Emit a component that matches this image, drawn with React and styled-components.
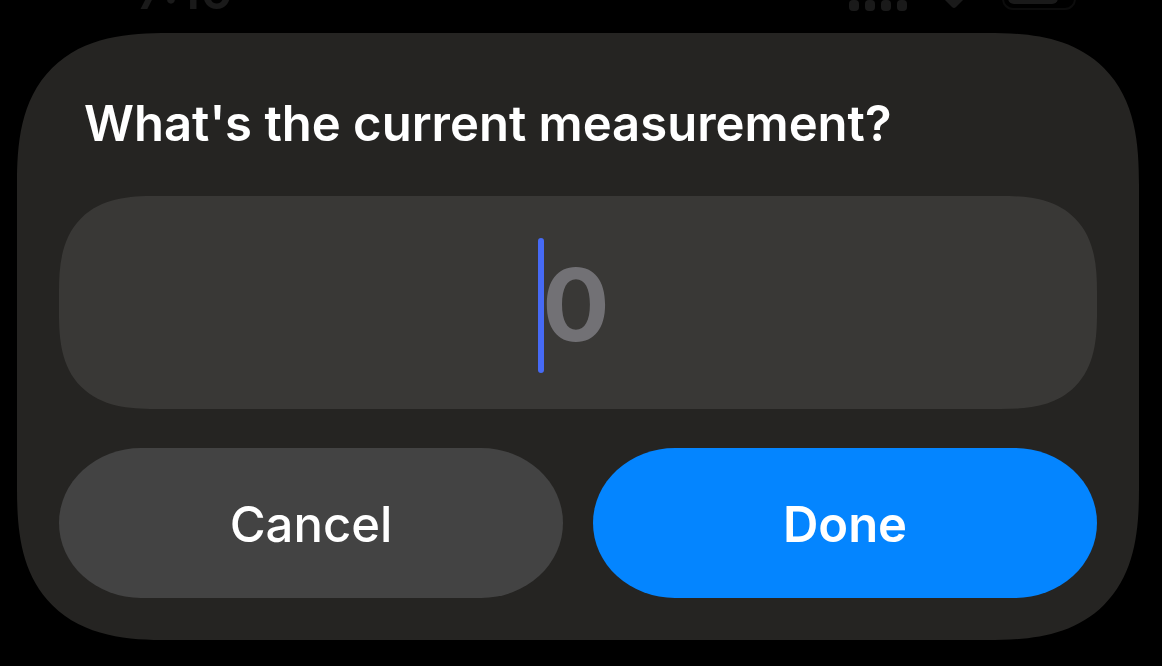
import React, { useState } from "react";
import styled, { createGlobalStyle } from "styled-components";

const GlobalStyle = createGlobalStyle`
  *, *::before, *::after { box-sizing: border-box; }
  html { background: #000; }
  body { margin: 0; background: #000; font-family: Inter, "Liberation Sans", sans-serif; }
`;

const Screen = styled.main`
  min-height: 100vh;
  overflow: hidden;
`;

const StatusBar = styled.header`
  display: flex;
  align-items: flex-start;
  justify-content: space-between;
  height: 33px;
  padding: 0 84px 0 136px;
  overflow: hidden;
  color: #1a1a1a;
`;

const Time = styled.time`
  margin-top: -39px;
  font-size: 50px;
  font-weight: 600;
  line-height: 60px;
`;

const StatusIcons = styled.svg`
  display: block;
  width: 230px;
  height: 16px;
`;

const Dialog = styled.form`
  display: flex;
  flex-direction: column;
  margin: 0 23px 0 17px;
  padding: 61px 42px 42px;
  background: #252422;
  border-radius: 122px;
  @supports (corner-shape: superellipse(1.4)) {
    border-radius: 152px;
    corner-shape: superellipse(1.4);
  }
`;

const Title = styled.label`
  padding: 0 25px;
  color: #fff;
  font-size: 49px;
  font-weight: 600;
  line-height: 60px;
`;

const Field = styled.div`
  position: relative;
  display: flex;
  height: 213px;
  margin: 42px 0 39px;
  background: #393836;
  border-radius: 76px;
  @supports (corner-shape: superellipse(1.4)) {
    border-radius: 96px;
    corner-shape: superellipse(1.4);
  }
`;

const ValueInput = styled.input`
  width: 100%;
  padding: 4px 4px 0 0;
  border: 0;
  outline: 0;
  background: transparent;
  color: #fff;
  caret-color: transparent;
  font: 700 100px Inter, "Liberation Sans", sans-serif;
  text-align: center;
  &::placeholder { color: #727175; opacity: 1; }
`;

const Caret = styled.span`
  position: absolute;
  top: 42px;
  left: calc(50% - 40px);
  width: 6px;
  height: 135px;
  border-radius: 3px;
  background: #466af5;
`;

const Actions = styled.div`
  display: grid;
  grid-template-columns: 1fr 1fr;
  gap: 30px;
`;

const Button = styled.button`
  height: 150px;
  padding: 2px 0 0;
  border: 0;
  border-radius: 82px / 75px;
  background: ${({ $primary }) => ($primary ? "#0485ff" : "#434343")};
  color: #fff;
  font: ${({ $primary }) => ($primary ? 600 : 500)} 49px Inter, "Liberation Sans", sans-serif;
`;

export default function App() {
  const [value, setValue] = useState("");
  return (
    <>
      <GlobalStyle />
      <Screen>
        <StatusBar>
          <Time>7:10</Time>
          <StatusIcons viewBox="0 0 230 16" aria-hidden="true">
            {[1, 17, 33, 49].map((x) => (
              <rect key={x} x={x} y="0" width="10" height="11" rx="4" fill="currentColor" />
            ))}
            <path d="M97 0H115L108 7Q106 9 104 7Z" fill="currentColor" />
            <rect x="155" y="-24" width="72" height="33" rx="10" fill="none" stroke="#0c0c0c" strokeWidth="2" />
            <rect x="160" y="-19" width="50" height="23" rx="6" fill="currentColor" />
          </StatusIcons>
        </StatusBar>
        <Dialog onSubmit={(e) => e.preventDefault()}>
          <Title htmlFor="measurement">What's the current measurement?</Title>
          <Field>
            <ValueInput
              id="measurement"
              inputMode="decimal"
              placeholder="0"
              value={value}
              onChange={(e) => setValue(e.target.value)}
            />
            {value === "" && <Caret />}
          </Field>
          <Actions>
            <Button type="button" onClick={() => setValue("")}>Cancel</Button>
            <Button type="submit" $primary>Done</Button>
          </Actions>
        </Dialog>
      </Screen>
    </>
  );
}
